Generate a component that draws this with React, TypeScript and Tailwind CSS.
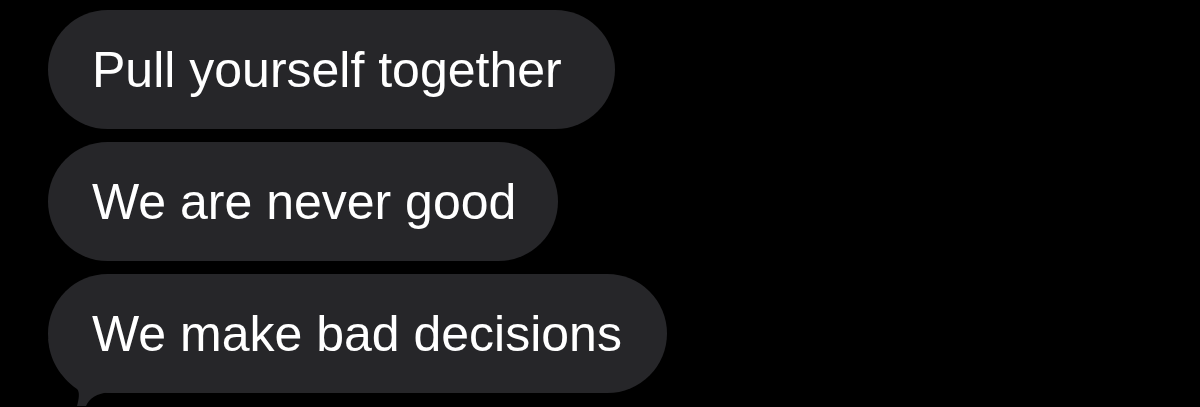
const messages = [
  { text: 'Pull yourself together', width: 'w-[567px]' },
  { text: 'We are never good', width: 'w-[510px]' },
  { text: 'We make bad decisions', width: 'w-[619px]', tail: true },
];

function Tail() {
  return (
    <svg
      className="absolute left-0 top-0 overflow-visible"
      width="80"
      height="140"
      viewBox="0 0 80 140"
      fill="#262629"
    >
      <path d="M0.3 65 C1 85 12 103 29 115 C32 118 31 125 29 132 L38 132 C41 125 48 119 63 118 L72 118 L72 65 Z" />
    </svg>
  );
}

export default function App() {
  return (
    <div
      className="h-[407px] w-[1200px] overflow-hidden bg-black pl-[48px] pt-[10px]"
      style={{ fontFamily: '"Liberation Sans", Arial, sans-serif' }}
    >
      <div className="flex flex-col items-start gap-[13px]">
        {messages.map((m) => (
          <div
            key={m.text}
            className={`relative flex h-[119px] items-center rounded-full bg-[#262629] pl-[44px] ${m.width}`}
          >
            {m.tail && <Tail />}
            <span className="relative whitespace-nowrap text-[50px] leading-none text-white">{m.text}</span>
          </div>
        ))}
      </div>
    </div>
  );
}
